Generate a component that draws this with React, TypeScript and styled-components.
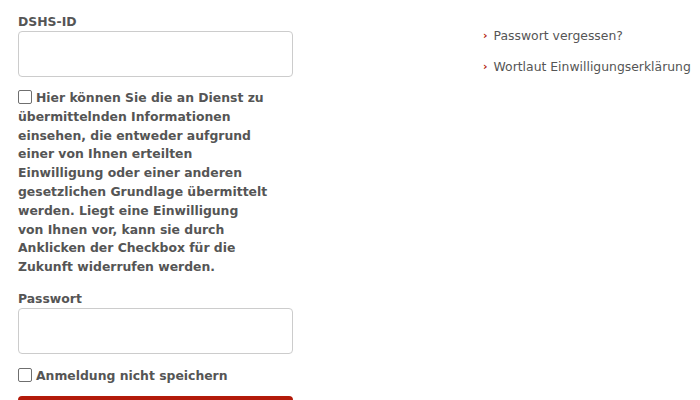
import React, { FC } from "react";
import styled, { createGlobalStyle } from "styled-components";

const GlobalStyle = createGlobalStyle`
  html, body {
    margin: 0;
    padding: 0;
    background: #fff;
  }
  body {
    font-family: Verdana, "DejaVu Sans", sans-serif;
    color: #555;
  }
`;

const Page = styled.div`
  display: grid;
  grid-template-columns: 275px 1fr;
  column-gap: 190px;
  padding: 13px 0 0 18px;
  width: 700px;
  height: 400px;
  box-sizing: border-box;
  overflow: hidden;
`;

const Form = styled.form`
  display: flex;
  flex-direction: column;
`;

const Label = styled.label`
  font-size: 12.4px;
  font-weight: bold;
  line-height: 18px;
  color: #555;
`;

const Field = styled.input`
  box-sizing: border-box;
  width: 275px;
  height: 46px;
  border: 1px solid #ccc;
  border-radius: 4px;
  background: #fff;
  outline: none;
`;

const CheckRow = styled.label<{ $gap?: number }>`
  display: block;
  margin-top: ${(p) => p.$gap ?? 12}px;
  font-size: 12.4px;
  font-weight: bold;
  line-height: 18.8px;
  color: #555;
  white-space: nowrap;
`;

const Box = styled.input.attrs({ type: "checkbox" })`
  appearance: none;
  box-sizing: border-box;
  width: 14px;
  height: 14px;
  margin: 0 4px 0 0;
  vertical-align: -2px;
  border: 1px solid #6f6f6f;
  border-radius: 2px;
  background: #fff;
`;

const Spaced = styled.div`
  margin-top: 13px;
  display: flex;
  flex-direction: column;
`;

const Submit = styled.button`
  margin-top: 10px;
  width: 275px;
  height: 40px;
  border: none;
  border-radius: 4px;
  background: #b31a0a;
  color: #fff;
`;

const Links = styled.ul`
  list-style: none;
  margin: 0;
  padding: 14px 0 0;
  display: flex;
  flex-direction: column;
  gap: 13px;
`;

const LinkItem = styled.li`
  display: flex;
  align-items: center;
  gap: 6px;
  font-size: 12.4px;
  line-height: 18px;
  color: #555;
  white-space: nowrap;
`;

const Chevron = styled.span`
  color: #b31a0a;
  font-size: 11px;
  font-weight: bold;
`;

const links = ["Passwort vergessen?", "Wortlaut Einwilligungserklärung"];

const consent = [
  "Hier können Sie die an Dienst zu",
  "übermittelnden Informationen",
  "einsehen, die entweder aufgrund",
  "einer von Ihnen erteilten",
  "Einwilligung oder einer anderen",
  "gesetzlichen Grundlage übermittelt",
  "werden. Liegt eine Einwilligung",
  "von Ihnen vor, kann sie durch",
  "Anklicken der Checkbox für die",
  "Zukunft widerrufen werden.",
];

const App: FC = () => {
  return (
    <>
      <GlobalStyle />
      <Page>
        <Form>
          <Label htmlFor="dshs">DSHS-ID</Label>
          <Field id="dshs" type="text" />
          <CheckRow>
            <Box />
            {consent.map((line, i) => (
              <React.Fragment key={i}>
                {i > 0 && <br />}
                {line}
              </React.Fragment>
            ))}
          </CheckRow>
          <Spaced>
            <Label htmlFor="pw">Passwort</Label>
            <Field id="pw" type="password" />
          </Spaced>
          <CheckRow $gap={13}>
            <Box />
            Anmeldung nicht speichern
          </CheckRow>
          <Submit type="button" />
        </Form>
        <Links>
          {links.map((l) => (
            <LinkItem key={l}>
              <Chevron>›</Chevron>
              {l}
            </LinkItem>
          ))}
        </Links>
      </Page>
    </>
  );
};

export default App;
